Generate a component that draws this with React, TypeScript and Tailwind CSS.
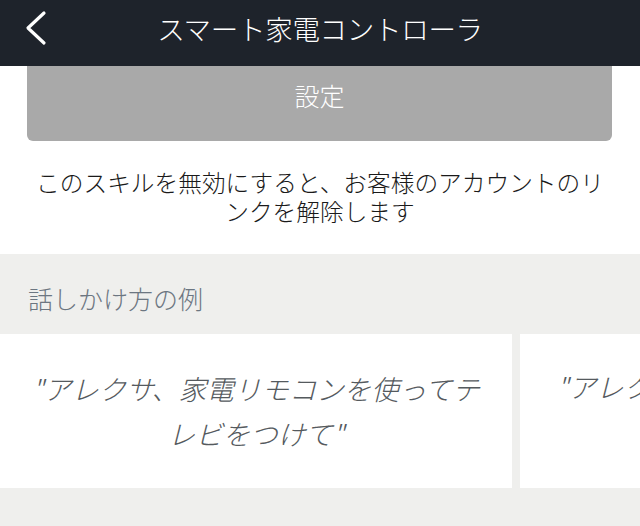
import React from "react";

const jp = { fontFamily: '"Noto Sans CJK JP", "Noto Sans", sans-serif' };

export default function App() {
  return (
    <div className="w-[640px] h-[526px] overflow-hidden bg-white" style={jp}>
      <header className="relative h-[66px] bg-[#1e232b] flex items-center justify-center">
        <svg
          className="absolute left-[22px] top-[9px]"
          width="30"
          height="40"
          viewBox="0 0 30 40"
          fill="none"
        >
          <polyline
            points="22,4 6,19 22,34"
            stroke="#ffffff"
            strokeWidth="3.2"
            strokeLinecap="round"
            strokeLinejoin="round"
          />
        </svg>
        <h1 className="text-white text-[27.5px] font-light leading-none tracking-[-0.3px] -mt-[8px]">
          スマート家電コントローラ
        </h1>
      </header>

      <div className="pl-[27px] pr-[28px]">
        <div className="h-[75px] bg-[#a9a9a9] rounded-b-[6px] flex items-center justify-center">
          <span className="text-white text-[25px] font-light leading-none -mt-[17px]">設定</span>
        </div>
      </div>

      <div className="px-[30px] pt-[27px] pb-[28px] text-center text-[#1a1a1a] text-[23.7px] font-light leading-[29px]">
        このスキルを無効にすると、お客様のアカウントのリンクを解除します
      </div>

      <section className="bg-[#efefed] h-[272px]">
        <div className="pl-[28px] pt-[29px] pb-[21px] text-[25px] font-light leading-[30px] text-[#6c7681]">
          話しかけ方の例
        </div>
        <div className="flex gap-[8px] overflow-hidden">
          <div className="shrink-0 w-[512px] h-[154px] bg-white flex items-center justify-center px-[24px]">
            <p className="text-center italic font-light text-[27.5px] leading-[45px] text-[#555a5e]">
              "アレクサ、家電リモコンを使ってテレビをつけて"
            </p>
          </div>
          <div className="shrink-0 w-[120px] h-[154px] bg-white overflow-hidden pl-[37px] pt-[30px]">
            <p className="italic font-light text-[27.5px] leading-[45px] text-[#555a5e] whitespace-nowrap">
              "アレク
            </p>
          </div>
        </div>
      </section>
    </div>
  );
}
